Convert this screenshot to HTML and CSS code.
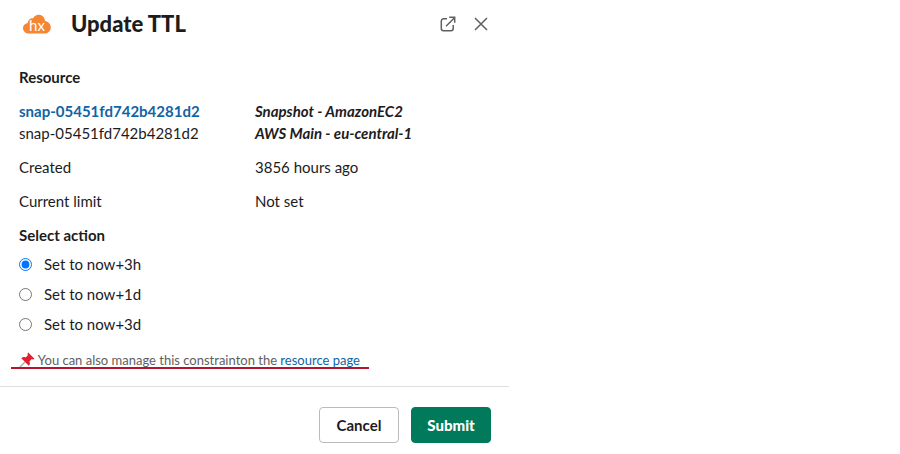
FILE: index.html

```html
<!DOCTYPE html>
<html lang="en">
<head>
  <meta charset="UTF-8">
  <title>Update TTL</title>
  <link rel="stylesheet" href="styles.css">
</head>
<body>
  <div class="modal">
    <div class="header">
      <svg class="logo" width="30" height="22" viewBox="0 0 30 22">
        <path fill="#f58634" d="M7 20.500C3.600 20.500 1 18.200 1 15.200c0-2.600 1.900-4.700 4.600-5.200C6.100 6.800 8.400 4.900 11 5.300 12.400 2.800 14.800 1.500 17.300 1.800c3.200.4 5.500 3 5.700 6.200 3.200.4 5.800 3.200 5.800 6.400 0 3.400-2.800 6.100-6.200 6.100z"/>
        <text class="logo-text" x="15" y="17.500" text-anchor="middle">hx</text>
      </svg>
      <h1 class="title">Update TTL</h1>
      <div class="header-icons">
        <svg width="16" height="16" viewBox="0 0 16 16" fill="none" stroke="#616061" stroke-width="1.500">
          <path d="M7 2.800H3.500C2.300 2.800 1.300 3.800 1.300 5v7.500c0 1.200 1 2.200 2.200 2.200H11c1.200 0 2.200-1 2.200-2.200V9"/>
          <path d="M6 10.200 14.500 1.700M9.200 1.300h5.500v5.500"/>
        </svg>
        <svg width="14" height="14" viewBox="0 0 14 14" fill="none" stroke="#616061" stroke-width="1.500">
          <path d="M1 1 13 13M13 1 1 13"/>
        </svg>
      </div>
    </div>

    <div class="body">
      <div class="label">Resource</div>
      <div class="resource">
        <div class="row-tight">
          <a class="snap-link" href="#">snap-05451fd742b4281d2</a>
          <em class="strong-em">Snapshot - AmazonEC2</em>
        </div>
        <div class="row-tight">
          <span>snap-05451fd742b4281d2</span>
          <em class="strong-em">AWS Main - eu-central-1</em>
        </div>
      </div>
      <div class="row"><span>Created</span><span>3856 hours ago</span></div>
      <div class="row"><span>Current limit</span><span>Not set</span></div>

      <div class="label action-label">Select action</div>
      <div class="options">
        <label class="option"><input type="radio" name="ttl" checked> Set to now+3h</label>
        <label class="option"><input type="radio" name="ttl"> Set to now+1d</label>
        <label class="option"><input type="radio" name="ttl"> Set to now+3d</label>
      </div>

      <div class="context">
        <svg class="pin" width="16" height="16" viewBox="0 0 16 16">
          <path stroke="#a8a8a8" stroke-width="1.200" d="M.5 15.500 6 10"/>
          <path fill="#e3202f" d="M9.200.5 15.500 6.800c-.7.800-1.900.8-2.800.3L10.500 9.400c.8 1.600.4 3.200-.7 4.300L2.300 6.200C3.400 5.100 5 4.700 6.600 5.500L8.900 3.300C8.400 2.400 8.400 1.200 9.200.5z"/>
        </svg>
        You can also manage this constrainton the <a href="#">resource page</a>
        <span class="scribble"></span>
      </div>
    </div>

    <div class="footer">
      <button class="btn btn-cancel">Cancel</button>
      <button class="btn btn-submit">Submit</button>
    </div>
  </div>
</body>
</html>
```

FILE: styles.css

```css
body { margin: 0; background: white; font-family: "Lato", sans-serif; font-size: 15px; color: #1d1c1d; }
a { color: #1264a3; text-decoration: none; }

.modal { width: 509px; }

.header { display: flex; align-items: center; height: 47px; padding: 0 21px 0 22px; }
.logo { flex: none; }
.logo-text { font-family: "Lato", sans-serif; font-size: 15px; fill: white; }
.title { margin: 0 0 0 19px; font-size: 22px; font-weight: 900; line-height: 28px; flex: 1; }
.header-icons { display: flex; align-items: center; gap: 18px; }

.body { padding: 21px 19px 0; }
.label { font-weight: 700; line-height: 18px; }

.resource { margin-top: 14px; }
.row-tight, .row { display: grid; grid-template-columns: 236px 1fr; line-height: 22px; }
.row { margin-top: 12px; }
.snap-link { font-weight: 700; }
.strong-em { font-weight: 700; font-style: italic; }

.action-label { margin-top: 14px; }
.options { margin-top: 5px; }
.option { display: flex; align-items: center; gap: 12px; height: 30px; }
.option input { margin: 0; width: 13px; height: 13px; accent-color: #0075ff; }

.context { position: relative; margin-top: 12px; font-size: 13px; line-height: 18px; color: #616061; }
.pin { vertical-align: -3px; }
.scribble { position: absolute; left: -8px; top: 16px; width: 358px; height: 2px; background: #b5132b; }

.footer { display: flex; justify-content: flex-end; gap: 12px; margin-top: 17px; padding: 20px 18px; border-top: 1px solid #ddd; }
.btn { height: 36px; width: 80px; font-family: "Lato", sans-serif; font-size: 15px; font-weight: 900; background: white; border: 1px solid #bbb; border-radius: 4px; padding: 0; }
.btn-cancel { font-weight: 700; color: #1d1c1d; }
.btn-submit { color: white; background: #007a5a; border-color: #007a5a; }
```
